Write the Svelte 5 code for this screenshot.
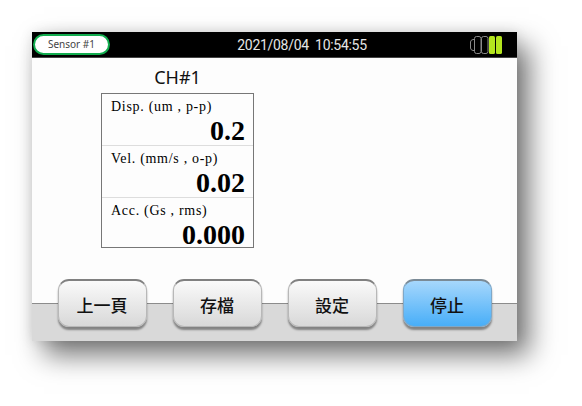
<script>
  const rows = [
    { label: 'Disp. (um , p-p)', value: '0.2' },
    { label: 'Vel. (mm/s , o-p)', value: '0.02' },
    { label: 'Acc. (Gs , rms)', value: '0.000' }
  ];
  const buttons = [
    { text: '上一頁' },
    { text: '存檔' },
    { text: '設定' },
    { text: '停止', active: true }
  ];
</script>

<div class="page">
  <div class="screen">
    <header class="topbar">
      <div class="sensor">Sensor #1</div>
      <div class="clock">2021/08/04&nbsp; 10:54:55</div>
      <svg class="battery" width="32" height="20" viewBox="0 0 32 20">
        <path d="M3 4.500 H4.500 V15.500 H3 Q0.500 15 0.500 13 V7 Q0.500 5 3 4.500 Z" fill="none" stroke="#8a8a8a" />
        <rect x="4.500" y="1.500" width="6.500" height="17" rx="2" fill="none" stroke="#8a8a8a" />
        <rect x="11.500" y="1.500" width="6.500" height="17" rx="2" fill="none" stroke="#8a8a8a" />
        <rect x="19" y="1" width="6" height="18" rx="1.500" fill="#b4e61e" />
        <rect x="26" y="1" width="6" height="18" rx="1.500" fill="#b4e61e" />
      </svg>
    </header>

    <main class="content">
      <section class="channel">
        <h1>CH#1</h1>
        <div class="table">
          {#each rows as row}
            <div class="row">
              <div class="label">{row.label}</div>
              <div class="value">{row.value}</div>
            </div>
          {/each}
        </div>
      </section>
    </main>

    <footer class="footer">
      {#each buttons as b}
        <div class="btn" class:active={b.active}>{b.text}</div>
      {/each}
    </footer>
  </div>
</div>

<style>
  :global(body) {
    margin: 0;
    background: #fff;
  }
  .page {
    width: 582px;
    height: 406px;
    padding: 32px 65px 65px 32px;
    box-sizing: border-box;
    overflow: hidden;
  }
  .screen {
    position: relative;
    width: 485px;
    height: 309px;
    display: flex;
    flex-direction: column;
    background: #fdfdfd;
    box-shadow:
      12px 14px 26px rgba(0, 0, 0, 0.55),
      0 0 12px rgba(0, 0, 0, 0.1);
  }
  .topbar {
    height: 26px;
    flex: none;
    background: #000;
    border-bottom: 1px solid #444;
    box-sizing: border-box;
    display: flex;
    align-items: center;
    padding: 0 15px 0 1px;
    justify-content: space-between;
  }
  .sensor {
    width: 77px;
    height: 21px;
    box-sizing: border-box;
    border: 2px solid #12ad4f;
    border-radius: 11px;
    background: #fff;
    color: #444;
    font: 10px/17px "Noto Sans", sans-serif;
    text-align: center;
  }
  .clock {
    color: #e6e6e6;
    font: 14px "Roboto", sans-serif;
    letter-spacing: -0.3px;
    margin-left: 24px;
  }
  .battery {
    display: block;
  }
  .content {
    flex: 1;
    padding-left: 69px;
  }
  .channel {
    width: 153px;
  }
  h1 {
    margin: 0;
    height: 35px;
    padding-top: 8px;
    box-sizing: border-box;
    color: #111;
    font: 400 18px/22px "Noto Sans", sans-serif;
    text-align: center;
  }
  .table {
    border: 1px solid #777;
    height: 155px;
    box-sizing: border-box;
    display: flex;
    flex-direction: column;
  }
  .row {
    flex: 1;
    padding: 6px 8px 0 9px;
    box-sizing: border-box;
    border-bottom: 1px solid #ddd;
  }
  .row:last-child {
    border-bottom: 0;
  }
  .label {
    color: #000;
    font: 14px/14px "Liberation Serif", serif;
    letter-spacing: 0.7px;
    white-space: nowrap;
  }
  .value {
    color: #000;
    font: 700 28px/28px "Liberation Serif", serif;
    text-align: right;
    margin-top: 3px;
  }
  .footer {
    height: 38.500px;
    flex: none;
    background: #d9d9d9;
    border-top: 1px solid #8c8c8c;
    box-sizing: border-box;
    display: flex;
    justify-content: flex-start;
    gap: 26px;
    padding-left: 25.500px;
  }
  .btn {
    width: 89px;
    height: 48px;
    margin-top: -24.500px;
    box-sizing: border-box;
    border: 1px solid #b8b8b8;
    border-top: 2px solid #808080;
    border-radius: 11px;
    background: linear-gradient(#fafafa, #d8d8d8);
    box-shadow: 0 3px 2px rgba(0, 0, 0, 0.4);
    color: #111;
    font: 500 17px/47px "Noto Sans CJK TC", sans-serif;
    text-align: center;
  }
  .btn.active {
    background: linear-gradient(#a6d7fc, #48aef8);
    border-color: #7fa8c8;
    border-top-color: #7a8a96;
  }
</style>
